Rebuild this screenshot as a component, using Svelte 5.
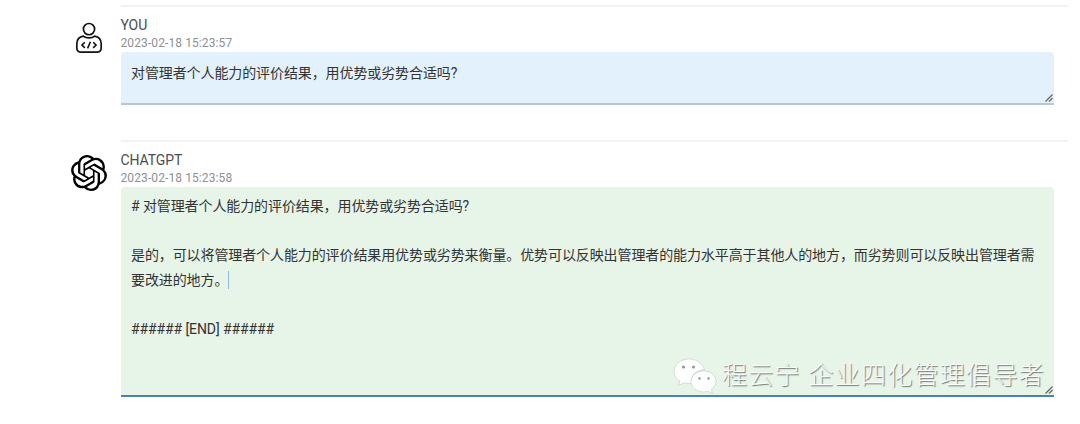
<script>
  const question = '对管理者个人能力的评价结果\uFF0C用优势或劣势合适吗?';
</script>

<main>
  <section class="msg first">
    <div class="avatar">
      <svg width="30" height="32" viewBox="0 0 32 34" fill="none" stroke="#111" stroke-width="1.8">
        <circle cx="16" cy="7.5" r="6" />
        <path d="M10 15 C5 16 3 18.5 3 23 V27.5 C3 30.5 4.5 32 7 32 H25 C27.5 32 29 30.5 29 27.5 V23 C29 18.5 27 16 22 15 C19 17.5 13 17.5 10 15 Z" />
        <path d="M11.5 21.5 L8.5 24.5 L11.5 27.5 M20.5 21.5 L23.5 24.5 L20.5 27.5 M17.5 21 L14.5 28" stroke-width="1.7" />
      </svg>
    </div>
    <div class="body">
      <div class="name">YOU</div>
      <div class="time">2023-02-18 15:23:57</div>
      <div class="box user">
        <p>{question}</p>
        <svg class="grip" width="8" height="8" viewBox="0 0 8 8"><path d="M0.5 7.5 L7.5 0.5 M4 7.5 L7.5 4" stroke="#666" stroke-width="1.2" /></svg>
      </div>
    </div>
  </section>

  <section class="msg second">
    <div class="avatar gpt">
      <svg width="36" height="36" viewBox="0 0 24 24" fill="#000">
        <path d="M22.2819 9.8211a5.9847 5.9847 0 0 0-.5157-4.9108 6.0462 6.0462 0 0 0-6.5098-2.9A6.0651 6.0651 0 0 0 4.9807 4.1818a5.9847 5.9847 0 0 0-3.9977 2.9 6.0462 6.0462 0 0 0 .7427 7.0966 5.98 5.98 0 0 0 .511 4.9107 6.051 6.051 0 0 0 6.5146 2.9001A5.9847 5.9847 0 0 0 13.2599 24a6.0557 6.0557 0 0 0 5.7718-4.2058 5.9894 5.9894 0 0 0 3.9977-2.9001 6.0557 6.0557 0 0 0-.7475-7.0729zm-9.022 12.6081a4.4755 4.4755 0 0 1-2.8764-1.0408l.1419-.0804 4.7783-2.7582a.7948.7948 0 0 0 .3927-.6813v-6.7369l2.02 1.1686a.071.071 0 0 1 .038.052v5.5826a4.504 4.504 0 0 1-4.4945 4.4944zm-9.6607-4.1254a4.4708 4.4708 0 0 1-.5346-3.0137l.142.0852 4.783 2.7582a.7712.7712 0 0 0 .7806 0l5.8428-3.3685v2.3324a.0804.0804 0 0 1-.0332.0615L9.74 19.9502a4.4992 4.4992 0 0 1-6.1408-1.6464zM2.3408 7.8956a4.485 4.485 0 0 1 2.3655-1.9728V11.6a.7664.7664 0 0 0 .3879.6765l5.8144 3.3543-2.0201 1.1685a.0757.0757 0 0 1-.071 0l-4.8303-2.7865A4.504 4.504 0 0 1 2.3408 7.872zm16.5963 3.8558L13.1038 8.364 15.1192 7.2a.0757.0757 0 0 1 .071 0l4.8303 2.7913a4.4944 4.4944 0 0 1-.6765 8.1042v-5.6772a.79.79 0 0 0-.407-.667zm2.0107-3.0231l-.142-.0852-4.7735-2.7818a.7759.7759 0 0 0-.7854 0L9.409 9.2297V6.8974a.0662.0662 0 0 1 .0284-.0615l4.8303-2.7866a4.4992 4.4992 0 0 1 6.6802 4.66zM8.3065 12.863l-2.02-1.1638a.0804.0804 0 0 1-.038-.0567V6.0742a4.4992 4.4992 0 0 1 7.3757-3.4537l-.142.0805L8.704 5.459a.7948.7948 0 0 0-.3927.6813zm1.0976-2.3654l2.602-1.4998 2.6069 1.4998v2.9994l-2.5974 1.4997-2.6067-1.4997Z" />
      </svg>
    </div>
    <div class="body">
      <div class="name">CHATGPT</div>
      <div class="time">2023-02-18 15:23:58</div>
      <div class="box bot">
        <p># {question}</p>
        <p class="blank"></p>
        <p>是的&#xFF0C;可以将管理者个人能力的评价结果用优势或劣势来衡量。优势可以反映出管理者的能力水平高于其他人的地方&#xFF0C;而劣势则可以反映出管理者需要改进的地方。<span class="caret"></span></p>
        <p class="blank"></p>
        <p>###### [END] ######</p>
        <svg class="grip" width="8" height="8" viewBox="0 0 8 8"><path d="M0.5 7.5 L7.5 0.5 M4 7.5 L7.5 4" stroke="#666" stroke-width="1.2" /></svg>

        <div class="mark">
          <svg width="46" height="36" viewBox="0 0 44 36">
            <path d="M16 1 C7.5 1 1 6.5 1 13.5 C1 17.5 3.2 20.8 6.8 23 L5.5 27.5 L10.8 24.8 C12.5 25.3 14 25.6 16 25.6 C17 25.6 18 25.5 19 25.3 C17 18 23 11.5 31.5 11.5 C29.5 5.5 23.5 1 16 1 Z" fill="#fff" fill-opacity=".92" stroke="#bbb" stroke-width=".5" />
            <path d="M31 13 C23.5 13 18 17.8 18 23.5 C18 29.2 23.5 34 31 34 C32.5 34 34 33.7 35.2 33.3 L39.5 35.5 L38.4 31.6 C41 29.6 43 26.8 43 23.5 C43 17.8 38 13 31 13 Z" fill="#fff" fill-opacity=".92" stroke="#bbb" stroke-width=".5" />
            <circle cx="10.5" cy="9" r="1.6" fill="#999" /><circle cx="20.5" cy="9" r="1.6" fill="#999" />
            <circle cx="26.5" cy="20.5" r="1.3" fill="#999" /><circle cx="35.5" cy="20.5" r="1.3" fill="#999" />
          </svg>
          <span>程云宁 企业四化管理倡导者</span>
        </div>
      </div>
    </div>
  </section>
</main>

<style>
  :global(body) {
    margin: 0;
    background: #fff;
  }

  main {
    width: 1080px;
    height: 424px;
    overflow: hidden;
    font-family: Roboto, "Noto Sans CJK SC", sans-serif;
    padding-top: 5px;
    box-sizing: border-box;
  }

  .msg {
    display: flex;
  }

  .second {
    margin-top: 35px;
  }

  .avatar {
    width: 121px;
    flex: none;
    display: flex;
    justify-content: flex-end;
    padding: 17px 17px 0 0;
    box-sizing: border-box;
  }

  .gpt {
    padding: 15px 14px 0 0;
  }

  .body {
    width: 947px;
    flex: none;
    border-top: 2px solid #f2f2f2;
    padding-top: 9px;
  }

  .name {
    font-size: 14px;
    line-height: 18px;
    color: #4a4d52;
    margin-left: -0.5px;
    letter-spacing: -0.1px;
  }

  .time {
    font-size: 12px;
    line-height: 18px;
    color: #8d9096;
    letter-spacing: 0.1px;
    margin-left: -0.5px;
  }

  .box {
    position: relative;
    width: 933px;
    box-sizing: border-box;
    border-radius: 4px 4px 0 0;
    padding: 7px 10px 0;
    font-size: 14px;
    line-height: 24.5px;
    letter-spacing: -0.1px;
    color: #333;
  }

  .box p {
    margin: 0;
  }

  .blank {
    height: 24.5px;
  }

  .user {
    height: 53px;
    padding-top: 9px;
    background: #e3f1fd;
    border-bottom: 2px solid #bcc6cf;
  }

  .bot {
    height: 210px;
    background: #e7f4e8;
    border-bottom: 2px solid #4a80bd;
  }

  .caret {
    display: inline-block;
    width: 1px;
    height: 18px;
    vertical-align: -4px;
    background: #8fb8dc;
  }

  .grip {
    position: absolute;
    right: 1px;
    bottom: 1px;
  }

  .mark {
    position: absolute;
    right: 9px;
    bottom: 1px;
    display: flex;
    align-items: center;
    gap: 4px;
    font-size: 25px;
    line-height: 36px;
    font-weight: 300;
    letter-spacing: 1.3px;
    white-space: nowrap;
    color: rgba(255, 255, 255, 0.95);
    text-shadow: 1px 1px 1px rgba(0, 0, 0, 0.5);
  }
</style>
